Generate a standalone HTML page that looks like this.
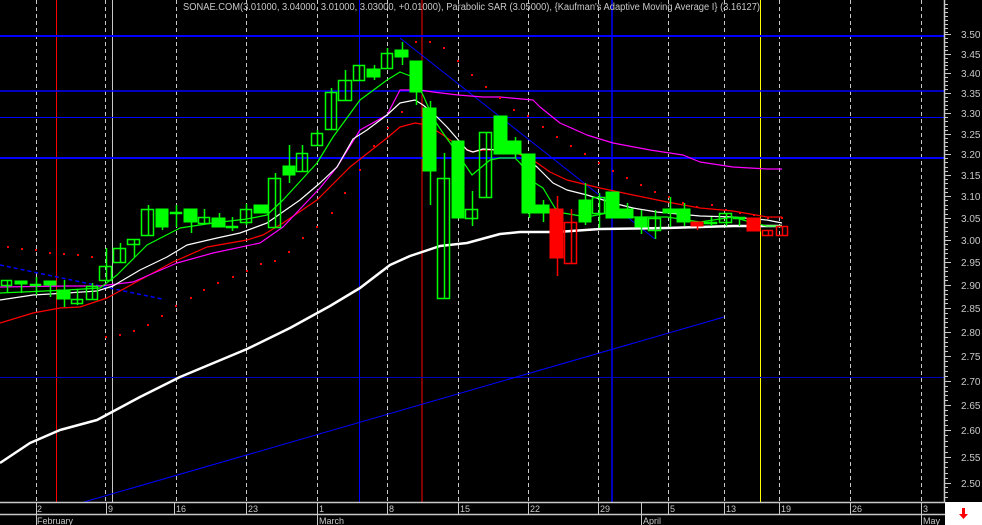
<!DOCTYPE html>
<html><head><meta charset="utf-8"><style>
html,body{margin:0;padding:0;background:#000;width:982px;height:525px;overflow:hidden}
svg{display:block}
text{font-family:"Liberation Sans",sans-serif;fill:#c8c8c8}
</style></head><body>
<svg id="s" width="982" height="525" viewBox="0 0 982 525" xmlns="http://www.w3.org/2000/svg">
<rect width="982" height="525" fill="#000"/>
<g id="grid" stroke="#c8c8c8" stroke-width="1" stroke-dasharray="4,3"></g>
<line x1="112.5" y1="0" x2="112.5" y2="502" stroke="#c8c8c8"/>
<line x1="56.5" y1="0" x2="56.5" y2="502" stroke="#f00"/>
<line x1="422" y1="0" x2="422" y2="502" stroke="#f00"/>
<line x1="359.5" y1="0" x2="359.5" y2="502" stroke="#0000ff"/>
<line x1="612" y1="0" x2="612" y2="502" stroke="#0000ff" stroke-width="1.5"/>
<line x1="760.5" y1="0" x2="760.5" y2="502" stroke="#ff0"/>
<g stroke="#0000ff">
<line x1="0" y1="36" x2="944" y2="36" stroke-width="2"/>
<line x1="0" y1="91" x2="944" y2="91" stroke-width="1.5"/>
<line x1="0" y1="117.5" x2="944" y2="117.5" stroke-width="1"/>
<line x1="0" y1="158" x2="944" y2="158" stroke-width="2"/>
<line x1="0" y1="377.5" x2="944" y2="377.5" stroke="#0000c0" stroke-width="1"/>
<line x1="400" y1="38" x2="655" y2="239" stroke-width="1"/>
<line x1="84" y1="502" x2="724" y2="317" stroke-width="1"/>
<line x1="0" y1="265" x2="162" y2="299" stroke-width="1.5" stroke-dasharray="4,3"/>
</g>
<g fill="none" stroke-linejoin="round">
<polyline stroke="#fff" stroke-width="2.5" points="0,463 30,443 60,430 97,420 140,397 180,377 247,349 290,328 330,306 360,288 390,265 410,256 440,246 467,243 500,234 520,232 557,232 600,229 667,228 733,226 782,226"/>
<polyline stroke="#f00" stroke-width="1.2" points="0,323 33,313 60,308 80,307 107,298 140,280 173,262 207,247 247,240 263,235 283,223 317,200 350,167 387,138 400,127 415,123 427,125 440,133 453,142 472,152 483,150 500,150 513,152 533,160 550,172 567,180 600,188 633,195 667,202 700,208 733,211 767,217 782,217"/>
<polyline stroke="#f0f" stroke-width="1.2" points="0,287 67,286 100,286 133,282 177,263 213,253 260,243 283,227 320,188 337,167 360,130 387,115 400,90 420,90 433,92 458,95 483,97 500,97 533,100 540,107 560,123 587,135 613,143 650,150 683,155 700,162 733,167 767,169 782,169"/>
<polyline stroke="#fff" stroke-width="1.2" points="0,300 33,295 67,293 97,291 113,286 140,270 167,257 187,245 217,238 240,233 267,223 300,200 320,183 337,167 353,139 367,130 387,115 400,103 415,100 423,105 433,113 447,127 467,150 473,152 483,149 513,151 523,155 537,167 553,183 567,190 587,195 613,203 633,208 657,212 700,216 733,217 767,220 782,223"/>
<polyline stroke="#0f0" stroke-width="1.2" points="0,293 67,290 100,288 117,275 147,245 180,228 213,223 247,219 267,215 283,200 317,163 333,137 360,100 387,80 400,72 413,77 423,95 433,118 443,133 453,147 472,175 490,160 500,158 515,158 520,163 535,183 543,188 555,208 563,213 587,217 607,213 633,217 667,217 700,222 733,217 750,222 767,226 782,226"/>
</g>
<g id="dots" fill="#f00"></g>
<g id="candles" stroke-width="1.5"></g>
<line x1="944.5" y1="0" x2="944.5" y2="502" stroke="#c8c8c8" stroke-width="1.5"/>
<g id="ticks" stroke="#c8c8c8" stroke-width="1"></g>
<g font-size="10" text-anchor="start">
<text x="961" y="38">3.50</text><text x="961" y="58">3.45</text><text x="961" y="77">3.40</text><text x="961" y="97">3.35</text><text x="961" y="117">3.30</text><text x="961" y="138">3.25</text><text x="961" y="158">3.20</text><text x="961" y="179">3.15</text><text x="961" y="200">3.10</text><text x="961" y="222">3.05</text><text x="961" y="244">3.00</text><text x="961" y="266">2.95</text><text x="961" y="289">2.90</text><text x="961" y="312">2.85</text><text x="961" y="336">2.80</text><text x="961" y="360">2.75</text><text x="961" y="385">2.70</text><text x="961" y="409">2.65</text><text x="961" y="434">2.60</text><text x="961" y="461">2.55</text><text x="961" y="487">2.50</text>
</g>
<text x="183" y="10" font-size="10" textLength="577" lengthAdjust="spacingAndGlyphs">SONAE.COM(3.01000, 3.04000, 3.01000, 3.03000, +0.01000), Parabolic SAR (3.05000), {Kaufman's Adaptive Moving Average I} (3.16127)</text>
<rect x="0" y="502" width="945" height="23" fill="#000"/>
<line x1="0" y1="502.5" x2="945" y2="502.5" stroke="#c8c8c8" stroke-width="1.5"/>
<line x1="0" y1="514.5" x2="945" y2="514.5" stroke="#c8c8c8" stroke-width="1.5"/>
<g id="dsep" stroke="#c8c8c8"></g>
<g font-size="9">
<text x="37" y="512">2</text><text x="108" y="512">9</text><text x="176" y="512">16</text><text x="248" y="512">23</text><text x="319" y="512">1</text><text x="389" y="512">8</text><text x="460" y="512">15</text><text x="530" y="512">22</text><text x="600" y="512">29</text><text x="670" y="512">5</text><text x="726" y="512">13</text><text x="781" y="512">19</text><text x="852" y="512">26</text><text x="923" y="512">3</text>
<text x="37" y="524">February</text><text x="319" y="524">March</text><text x="643" y="524">April</text><text x="923" y="524">May</text>
</g>
<rect x="945" y="502" width="37" height="23" fill="#fff"/>
<path d="M962 508h3v6h3l-4.5 5l-4.5-5h3z" fill="#f00"/>
</svg>
<script>
var NS="http://www.w3.org/2000/svg";
function el(p,t,a){var e=document.createElementNS(NS,t);for(var k in a)e.setAttribute(k,a[k]);p.appendChild(e);return e;}
var g=document.getElementById("grid");
[36,105,176,246,317,387,458,528,598,668,724,779,850,921].forEach(function(x){el(g,"line",{x1:x+.5,y1:0,x2:x+.5,y2:502});});
var ds=document.getElementById("dsep");
[36,106,174,246,317,387,458,528,598,641,668,724,779,850,921].forEach(function(x){el(ds,"line",{x1:x+.5,y1:502,x2:x+.5,y2:514});});
[36,317,641,921].forEach(function(x){el(ds,"line",{x1:x+.5,y1:514,x2:x+.5,y2:525});});
var tk=document.getElementById("ticks");
var L=[34,54,73,93,113,134,154,175,196,218,240,262,285,308,332,356,381,405,430,457,483];
for(var i=0;i<L.length;i++){el(tk,"line",{x1:945,y1:L[i]+.5,x2:951,y2:L[i]+.5});
 if(i<L.length-1){var d=(L[i+1]-L[i])/5;for(var j=1;j<5;j++){var y=Math.round(L[i]+d*j)+.5;el(tk,"line",{x1:945,y1:y,x2:948,y2:y});}}}
for(var y=4;y<34;y+=4)el(tk,"line",{x1:945,y1:y+.5,x2:948,y2:y+.5});
for(var y=487;y<502;y+=5)el(tk,"line",{x1:945,y1:y+.5,x2:948,y2:y+.5});
var D=[[8,247],[22,249],[36,250],[50,253],[64,254],[78,255],[92,257],[106,337],[120,335],[134,331],[148,325],[162,316],[176,306],[191,298],[204,290],[218,283],[233,277],[247,271],[261,264],[275,261],[289,252],[303,238],[317,227],[332,213],[345,193],[360,170],[374,146],[388,128],[402,112],[416,42],[430,42],[444,48],[458,61],[472,75],[486,87],[500,98],[514,110],[528,116],[543,127],[557,137],[571,146],[585,154],[599,163],[613,171],[627,178],[641,185],[655,192],[669,197],[683,203],[697,207],[712,205],[726,210],[740,213],[754,215],[768,218],[782,218]];
var dg=document.getElementById("dots");D.forEach(function(p){el(dg,"rect",{x:p[0]-1,y:p[1]-1,width:2,height:2});});
var C=[[1,12,280,285,280,293,"H"],[15,27,281,284,281,293,"F"],[30,41,284,284,277,295,"H"],[44,56,281,285,281,297,"F"],[57,70,290,299,280,307,"F"],[71,83,299,303,290,305,"H"],[86,98,286,299,283,299,"H"],[99,112,266,280,248,280,"H"],[113,126,248,262,243,262,"H"],[127,140,239,244,239,257,"H"],[141,154,209,235,205,235,"H"],[156,168,209,227,209,230,"F"],[170,182,212,212,205,227,"H"],[184,197,209,222,209,233,"F"],[198,210,217,223,209,223,"H"],[212,225,218,227,213,227,"F"],[226,238,226,226,217,231,"H"],[240,252,209,222,204,225,"H"],[254,268,205,213,205,213,"F"],[268,281,178,227,173,227,"H"],[283,295,166,175,145,183,"F"],[296,308,153,171,145,171,"H"],[311,323,133,145,130,145,"H"],[325,337,92,129,88,129,"H"],[338,352,80,100,70,100,"H"],[353,365,65,80,65,80,"H"],[367,380,69,77,65,80,"F"],[381,393,53,68,48,68,"H"],[395,408,50,57,42,65,"F"],[410,422,61,92,61,105,"F"],[423,436,108,171,101,205,"F"],[437,450,178,298,153,298,"H"],[452,464,141,218,141,218,"F"],[465,478,209,218,191,226,"H"],[479,492,132,197,132,197,"H"],[494,507,116,154,116,154,"F"],[508,521,141,154,137,158,"F"],[522,535,154,213,154,218,"F"],[536,549,205,213,200,222,"F"],[550,563,209,258,196,276,"R"],[564,577,222,263,209,263,"r"],[579,591,200,222,183,225,"F"],[592,605,197,213,193,228,"H"],[606,619,192,218,192,218,"F"],[620,633,209,218,203,218,"F"],[635,647,218,227,210,234,"F"],[648,661,218,230,210,239,"H"],[663,676,209,213,197,227,"F"],[677,690,209,222,203,226,"F"],[691,703,222,226,222,230,"R"],[704,717,222,222,217,226,"H"],[719,732,213,222,213,226,"H"],[733,745,217,217,217,226,"H"],[747,760,218,231,218,231,"R"],[762,773,230,235,230,235,"r"],[776,788,226,235,226,235,"r"]];
var cg=document.getElementById("candles");
C.forEach(function(c){var col=(c[6]=="R"||c[6]=="r")?"#f00":"#0f0";var cx=Math.round((c[0]+c[1])/2)+.5;
 el(cg,"line",{x1:cx,y1:c[4],x2:cx,y2:c[5],stroke:col});
 var h=Math.max(c[3]-c[2],1);
 if(c[6]=="F"||c[6]=="R")el(cg,"rect",{x:c[0],y:c[2],width:c[1]-c[0],height:h,fill:col,stroke:col,"stroke-width":1});
 else el(cg,"rect",{x:c[0]+.5,y:c[2]+.5,width:c[1]-c[0]-1,height:h,fill:"none",stroke:col});
});
</script>
</body></html>
